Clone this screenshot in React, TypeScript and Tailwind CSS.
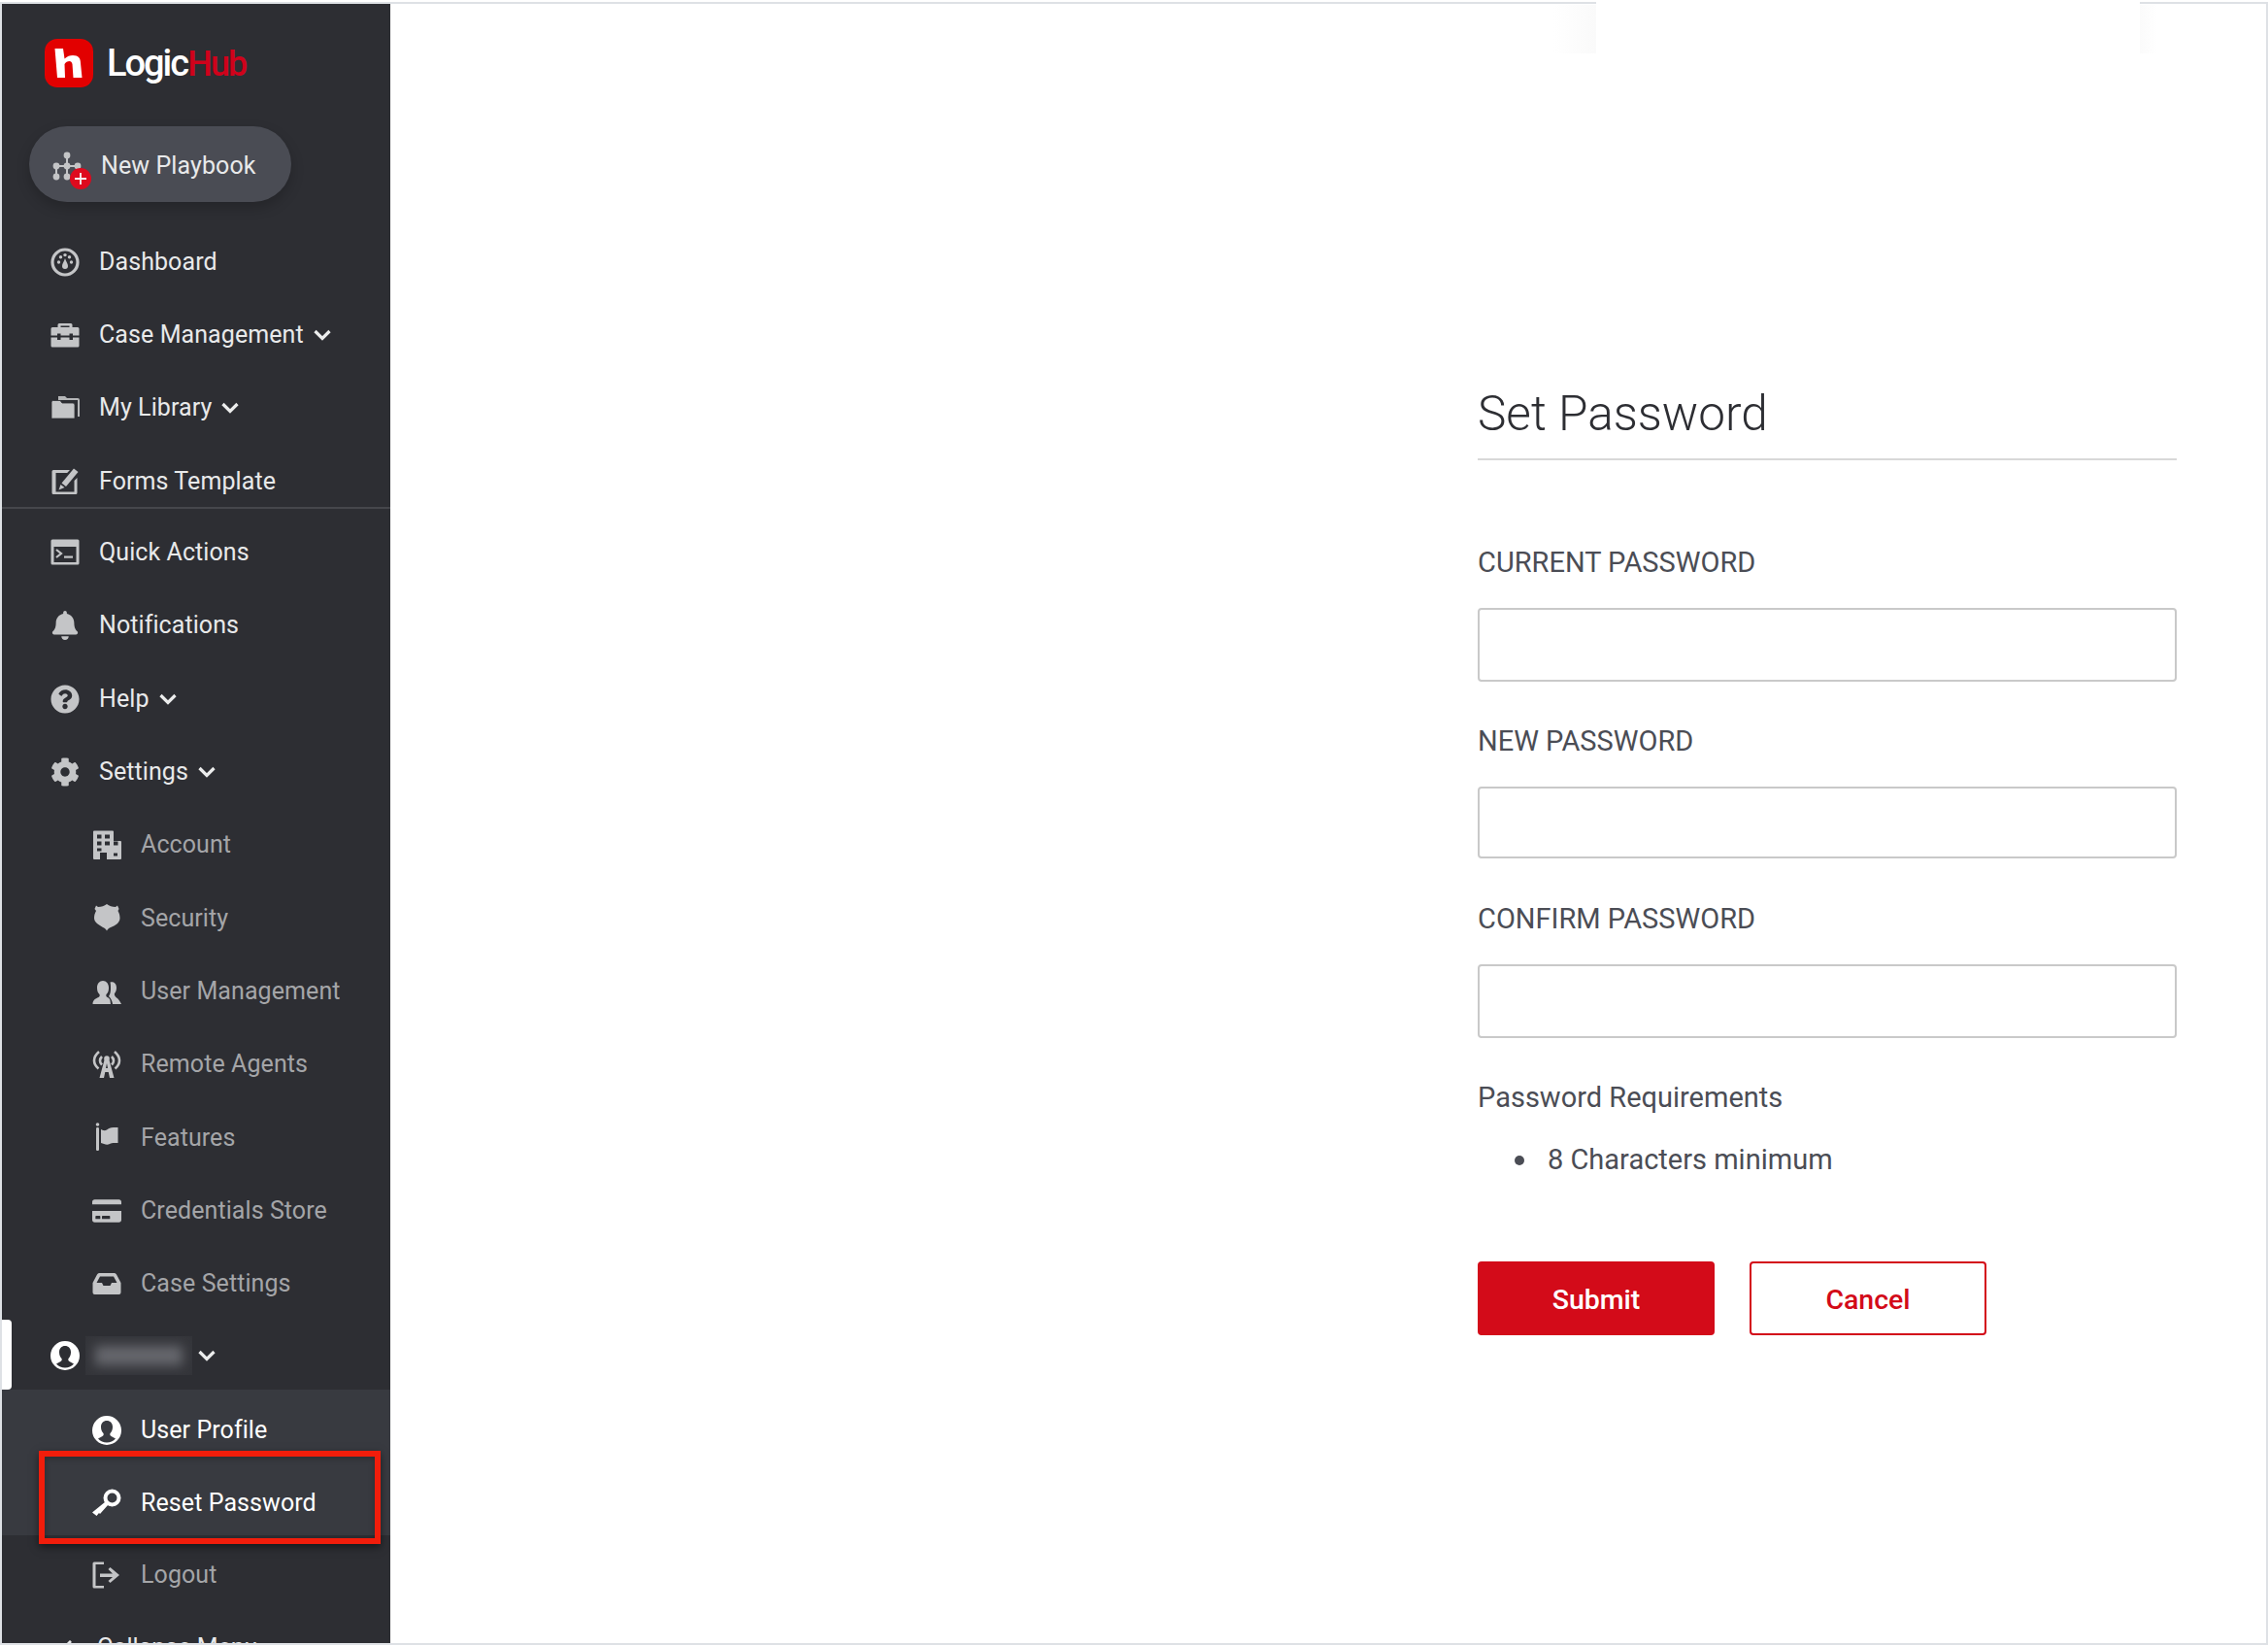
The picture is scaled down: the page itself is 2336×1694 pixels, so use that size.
import type { ReactNode } from 'react'
import { FaBell, FaChevronLeft, FaCog, FaCreditCard, FaQuestionCircle } from 'react-icons/fa'

const Svg = ({ children }: { children: ReactNode }) => (
  <svg viewBox="0 0 30 30" className="w-[30px] h-[30px]" fill="currentColor">
    {children}
  </svg>
)

const DashboardIcon = () => (
  <Svg>
    <circle cx="15" cy="15" r="13" fill="none" stroke="currentColor" strokeWidth="3.200" />
    <circle cx="8.500" cy="15" r="1.700" />
    <circle cx="10.500" cy="9.800" r="1.700" />
    <circle cx="15" cy="7.600" r="1.700" />
    <circle cx="19.500" cy="9.800" r="1.700" />
    <circle cx="21.500" cy="15" r="1.700" />
    <path d="M15 11c1.200 3.500 3 5.500 3 8a3 3 0 0 1-6 0c0-2.500 1.800-4.500 3-8z" />
  </Svg>
)

const CaseIcon = () => (
  <Svg>
    <path d="M9 3h12a1.500 1.500 0 0 1 1.500 1.500V7H19.500V5.500h-9V7H7.500V4.500A1.500 1.500 0 0 1 9 3z" />
    <path d="M2 7h26a1.500 1.500 0 0 1 1.500 1.500V15.500H23v-2h-3.500v2h-9v-2H7v2H.5V8.500A1.500 1.500 0 0 1 2 7z" />
    <path d="M.5 17.500H7V20h3.500v-2.500h9V20H23v-2.500h6.500V26a1.500 1.500 0 0 1-1.500 1.500H2A1.500 1.500 0 0 1 .5 26z" />
  </Svg>
)

const LibraryIcon = () => (
  <Svg>
    <path d="M8 3h7l2 2h11a2 2 0 0 1 2 2v17h-2V7H8z" opacity="0.9" />
    <path d="M1 9a1.500 1.500 0 0 1 1.500-1.500H10l2 2.500h11a2 2 0 0 1 2 2v14H2.500A1.500 1.500 0 0 1 1 25.500z" stroke="#2d2e33" strokeWidth="0.800" />
  </Svg>
)

const FormsIcon = () => (
  <Svg>
    <path d="M3 3h17l-2.800 3H5.500v19.500h19V14l3-3v15.500A1.500 1.500 0 0 1 26 28H3a1.500 1.500 0 0 1-1.500-1.500v-22A1.500 1.500 0 0 1 3 3z" />
    <path d="M24 1.500l4.500 3.500L16 20l-4.500-3.500z" />
    <path d="M10.500 18l4 3-6 2.500z" />
  </Svg>
)

const QuickIcon = () => (
  <Svg>
    <path fillRule="evenodd" d="M2 1.500h26A1.500 1.500 0 0 1 29.500 3v23a1.500 1.500 0 0 1-1.500 1.500H2A1.500 1.500 0 0 1 .5 26V3A1.500 1.500 0 0 1 2 1.500zM3.500 9v16h23V9z" />
    <path d="M6 12l5 4-5 4" fill="none" stroke="currentColor" strokeWidth="2.200" />
    <rect x="14" y="18.500" width="9" height="2.200" />
  </Svg>
)

const AccountIcon = () => (
  <Svg>
    <path fillRule="evenodd" d="M1 1.500A1 1 0 0 1 2 .5h19a1 1 0 0 1 1 1V11h7a1 1 0 0 1 1 1v17a1 1 0 0 1-1 1H15v-7H8v7H2a1 1 0 0 1-1-1zM5 4.500v4h4.500v-4zm8 0v4h5v-4zm-8 7v4h4.500v-4zm8 0v4h5v-4zm9 0v4h4.500v-4zM5 18.500v3h4.500v-3zm17 5v3h4v-3z" />
  </Svg>
)

const SecurityIcon = () => (
  <Svg>
    <path d="M4 2.500l2 1.500c3.500 0 6.500-1 9-3 2.500 2 5.500 3 9 3l2-1.500 1.500 3.500-1 2c1.500 2.500 2 5 2 7.500 0 5-5 7.500-9.500 9.500-1.500.6-3 1.500-4 3.500-1-2-2.500-2.900-4-3.500C7 22.500 2 20 2 15.500c0-2.500.5-5 2-7.500l-1.500-2z" />
  </Svg>
)

const UsersIcon = () => (
  <Svg>
    <path d="M19 28H.5c0-4 2.500-5.500 6-7 1-.5 1.500-1.500 1-3-2-2-2.500-4-2.500-7 0-4 2.500-7 6-7s6 3 6 7c0 3-.5 5-2.500 7-.5 1.500 0 2.500 1 3 3.500 1.500 3 3.500 3.500 7z" />
    <path d="M18.500 5.500c3-1 6.500 1 6.500 5.500 0 3-1 5-2 6-.5 1.500.5 3 1.500 4 3 2 4 4 5.500 7H21c-.5-3-1.500-6-4-8 1.500-2 2-5 2-8 0-2.500 0-4.500-.5-6.500z" />
  </Svg>
)

const RemoteIcon = () => (
  <Svg>
    <path d="M15 8l2.200 1.500L22.500 29H18l-1.300-6h-3.400L12 29H7.500l5.300-19.500zM15 14l-1 5h2z" />
    <circle cx="15" cy="9" r="2.800" />
    <g fill="none" stroke="currentColor" strokeWidth="2.600">
      <path d="M7 2C3.500 5 2 8 2 11c0 3 1.500 6 4.500 8.500" />
      <path d="M23 2c3.500 3 5 6 5 9 0 3-1.500 6-4.500 8.500" />
      <path d="M10 7c-1.500 1.500-2 3-2 4.500s1 3 2 4" />
      <path d="M20 7c1.500 1.500 2 3 2 4.500s-1 3-2 4" />
    </g>
  </Svg>
)

const FlagIcon = () => (
  <Svg>
    <circle cx="5.500" cy="2" r="1.800" />
    <rect x="4" y="5" width="3" height="24" rx="1.200" />
    <path d="M9 7c3 1.500 4 1.500 6 .5 2-1.500 3.500-2.500 7-2.500h4.500v16c-4 0-6-.5-8.500 1-3 1.500-6 0-9-1z" />
  </Svg>
)

const InboxIcon = () => (
  <Svg>
    <path
      fillRule="evenodd"
      d="M7 4h16q1.200 0 2 1.500L29.500 14v10q0 2-2 2h-25q-2 0-2-2V14L5 5.500Q5.800 4 7 4zM8 7.500L4.500 14H10l1.500 3h7l1.500-3h5.500L22 7.500z"
    />
  </Svg>
)

const UserCircleIcon = () => (
  <Svg>
    <path fillRule="evenodd" d="M15 0a15 15 0 1 1 0 30 15 15 0 0 1 0-30zM15 5c-3.500 0-6 2.500-6 6.500 0 3 1 5 2.500 6.500.5 1.500 0 2.500-1 3l-4.500 2.500a12 12 0 0 0 18 0L19.500 21c-1-.5-1.500-1.500-1-3 1.500-1.500 2.500-3.500 2.500-6.500C21 7.500 18.500 5 15 5z" />
  </Svg>
)

const KeyIcon = () => (
  <Svg>
    <circle cx="20.500" cy="9.500" r="7" fill="none" stroke="currentColor" strokeWidth="4" />
    <path d="M13.500 13.500l3 3L8 26l-1-1-2.500 3L0 24.500z" />
  </Svg>
)

const LogoutIcon = () => (
  <Svg>
    <path d="M12 1.500v2.500H3.500v22H12v2.500H2A1.500 1.500 0 0 1 .5 27V3A1.500 1.500 0 0 1 2 1.500z" />
    <path d="M8 13.500h13l-4.500-4.500 2-2L28 15l-9.500 8-2-2 4.500-4H8z" />
  </Svg>
)

const PlaybookIcon = () => (
  <svg viewBox="0 0 42 42" className="w-[42px] h-[42px] shrink-0 mt-[12px]">
    <g stroke="#c4c5c7" strokeWidth="2" fill="none">
      <path d="M15 4v24M4 15h22M4 15v11M15 15v11" />
    </g>
    <g fill="#c4c5c7">
      <circle cx="15" cy="4" r="3.400" />
      <circle cx="4" cy="15" r="3.400" />
      <circle cx="15" cy="15" r="3.400" />
      <circle cx="26" cy="15" r="3.400" />
      <circle cx="4" cy="26" r="3.400" />
      <circle cx="15" cy="26" r="3.400" />
    </g>
    <circle cx="29" cy="28" r="11" fill="#de0a1e" />
    <path d="M29 22v12M23 28h12" stroke="#f6f6f6" strokeWidth="1.800" />
  </svg>
)

const Chevron = ({ className = 'ml-[10px]' }: { className?: string }) => (
  <svg viewBox="0 0 18 12" className={`w-[18px] h-[12px] ${className}`} fill="none" stroke="#eceded" strokeWidth="3.200">
    <path d="M1.500 2l7.500 7.500L16.500 2" />
  </svg>
)

type Item = { label: string; icon: ReactNode; caret?: boolean }

const fa = 'w-[30px] h-[30px]'

const mainTop: Item[] = [
  { label: 'Dashboard', icon: <DashboardIcon /> },
  { label: 'Case Management', icon: <CaseIcon />, caret: true },
  { label: 'My Library', icon: <LibraryIcon />, caret: true },
  { label: 'Forms Template', icon: <FormsIcon /> },
]

const mainBottom: Item[] = [
  { label: 'Quick Actions', icon: <QuickIcon /> },
  { label: 'Notifications', icon: <FaBell className={fa} /> },
  { label: 'Help', icon: <FaQuestionCircle className={fa} />, caret: true },
  { label: 'Settings', icon: <FaCog className={fa} />, caret: true },
]

const settings: Item[] = [
  { label: 'Account', icon: <AccountIcon /> },
  { label: 'Security', icon: <SecurityIcon /> },
  { label: 'User Management', icon: <UsersIcon /> },
  { label: 'Remote Agents', icon: <RemoteIcon /> },
  { label: 'Features', icon: <FlagIcon /> },
  { label: 'Credentials Store', icon: <FaCreditCard className={fa} /> },
  { label: 'Case Settings', icon: <InboxIcon /> },
]

function NavRow({ item }: { item: Item }) {
  return (
    <div className="flex items-center h-[75.3px] pl-[50px] text-[25px] tracking-[0.08px] text-[#e8e9ea]">
      <span className="w-[30px] flex justify-center text-[#c4c5c7] mr-[20px]">{item.icon}</span>
      <span>{item.label}</span>
      {item.caret && <Chevron />}
    </div>
  )
}

function SubRow({ item, active }: { item: Item; active?: boolean }) {
  return (
    <div
      className={`flex items-center h-[75.3px] pl-[93px] text-[25px] tracking-[0.08px] ${
        active ? 'text-white' : 'text-[#a4a5a8]'
      }`}
    >
      <span className={`w-[30px] flex justify-center mr-[20px] ${active ? 'text-white' : 'text-[#c4c5c7]'}`}>
        {item.icon}
      </span>
      <span>{item.label}</span>
    </div>
  )
}

function Field({ label, height = 'h-[76px]' }: { label: string; height?: string }) {
  return (
    <div className="flex flex-col">
      <label className="h-[36px] pt-[3px] flex items-center text-[29px] text-[#4b4d55] uppercase">{label}</label>
      <input
        type="password"
        className={`mt-[30px] w-full rounded-[4px] border-2 border-[#c9c9c9] bg-white outline-none ${height}`}
      />
    </div>
  )
}

export default function App() {
  return (
    <div
      className="relative w-[2336px] h-[1694px] overflow-hidden bg-white pt-[2px]"
      style={{ fontFamily: 'Roboto, "Noto Sans", sans-serif' }}
    >
      <div className="flex h-full border-2 border-[#dee1e5]">
        <aside className="relative w-[400px] shrink-0 overflow-hidden bg-[#2d2e33]">
          <div className="flex items-center h-[50px] mt-[36px] pl-[44px]">
            <div className="w-[50px] h-[50px] rounded-[13px] bg-[#e20000]">
              <svg viewBox="0 0 50 50" className="w-[50px] h-[50px]" fill="#fff">
                <path d="M10.500 10H19l1.500 10.500C23 18 26 17 29 17c6 0 8 3 8 8l1.500 15h-9l-1-14c-.5-2-1.500-3-3-3-2 0-4 1-5 3l.5 14h-8z" />
              </svg>
            </div>
            <div className="ml-[14px] text-[38px] leading-none tracking-[-2px] font-medium text-white">
              Logic<span className="text-[36px] tracking-[-1.8px] text-[#d0021b]">Hub</span>
            </div>
          </div>

          <div className="flex items-center w-[270px] h-[78px] mt-[40px] ml-[28px] pl-[24px] pt-[4px] rounded-full bg-[#4a4c54] text-[25px] tracking-[0.1px] text-[#e8e9ea] shadow-[0_6px_14px_rgba(0,0,0,0.2)]">
            <PlaybookIcon />
            <span className="ml-[8px]">New Playbook</span>
          </div>

          <nav className="mt-[24px]">
            <div className="h-[291.8px] border-b-2 border-[#46474c]">
              {mainTop.map((item) => (
                <NavRow key={item.label} item={item} />
              ))}
            </div>
            <div className="pt-[7.5px]">
              {mainBottom.map((item) => (
                <NavRow key={item.label} item={item} />
              ))}
              {settings.map((item) => (
                <SubRow key={item.label} item={item} />
              ))}

              <div className="relative flex items-center h-[75.3px] pl-[50px] -mt-[1px]">
                <span className="absolute left-0 top-0 w-[10px] h-[72px] bg-white rounded-r-[4px]" />
                <span className="w-[30px] text-white">
                  <UserCircleIcon />
                </span>
                <span className="ml-[6px] w-[110px] h-[40px] bg-[#34353a] flex items-center justify-center overflow-hidden">
                  <span className="w-[90px] h-[20px] bg-[#66676d] blur-[6px]" />
                </span>
                <Chevron className="ml-[6px]" />
              </div>

              <div className="bg-[#383a40] -mt-[2.5px] pt-[3.5px] h-[150px] mb-[2.5px]">
                <SubRow item={{ label: 'User Profile', icon: <UserCircleIcon /> }} active />
                <SubRow item={{ label: 'Reset Password', icon: <KeyIcon /> }} active />
              </div>
              <SubRow item={{ label: 'Logout', icon: <LogoutIcon /> }} />

              <div className="flex items-center h-[75.3px] pl-[60px] text-[25px] text-[#e8e9ea]">
                <FaChevronLeft className="w-[14px] h-[18px] mr-[24px]" />
                Collapse Menu
              </div>
            </div>
          </nav>
        </aside>

        <main className="flex-1 flex justify-end pr-[92px]">
          <form className="w-[720px] pt-[388px]">
            <h1 className="h-[82px] border-b-2 border-[#d8d8d8] text-[49.5px] leading-[68px] font-light text-[#2d2e33]">
              Set Password
            </h1>
            <div className="mt-[86px] flex flex-col">
              <Field label="Current Password" />
              <div className="mt-[42px]">
                <Field label="New Password" height="h-[74px]" />
              </div>
              <div className="mt-[43px]">
                <Field label="Confirm Password" />
              </div>
            </div>
            <p className="mt-[44px] h-[36px] flex items-center text-[29px] text-[#4b4d55]">Password Requirements</p>
            <ul className="mt-[28px] pl-[38px] text-[29px] text-[#4b4d55]">
              <li className="flex items-center h-[36px]">
                <span className="w-[10px] h-[10px] rounded-full bg-[#4b4d55] mr-[24px]" />
                8 Characters minimum
              </li>
            </ul>
            <div className="mt-[86px] flex gap-[36px]">
              <button type="button" className="w-[244px] h-[76px] pt-[4px] rounded-[4px] bg-[#d30b19] text-[28.5px] font-medium text-white">
                Submit
              </button>
              <button type="button" className="w-[244px] h-[76px] pt-[4px] rounded-[4px] border-2 border-[#d30b19] bg-white text-[28.5px] font-medium text-[#d30b19]">
                Cancel
              </button>
            </div>
          </form>
        </main>
      </div>

      {/* annotation box from the screenshot */}
      <div className="absolute left-[40px] top-[1494px] w-[352px] h-[96px] border-[6px] border-[#f11d0b] shadow-[0_3px_8px_rgba(0,0,0,0.5),inset_0_2px_6px_rgba(0,0,0,0.25)]" />

      {/* white patch over the top edge, with the faint fade either side of it */}
      <div className="absolute left-[1600px] top-[5px] w-[44px] h-[50px] bg-gradient-to-r from-white to-[#fafafa]" />
      <div className="absolute left-[2204px] top-[5px] w-[18px] h-[50px] bg-gradient-to-r from-[#fbfbfb] to-white" />
      <div className="absolute left-[1644px] top-0 w-[560px] h-[60px] bg-white" />
    </div>
  )
}
